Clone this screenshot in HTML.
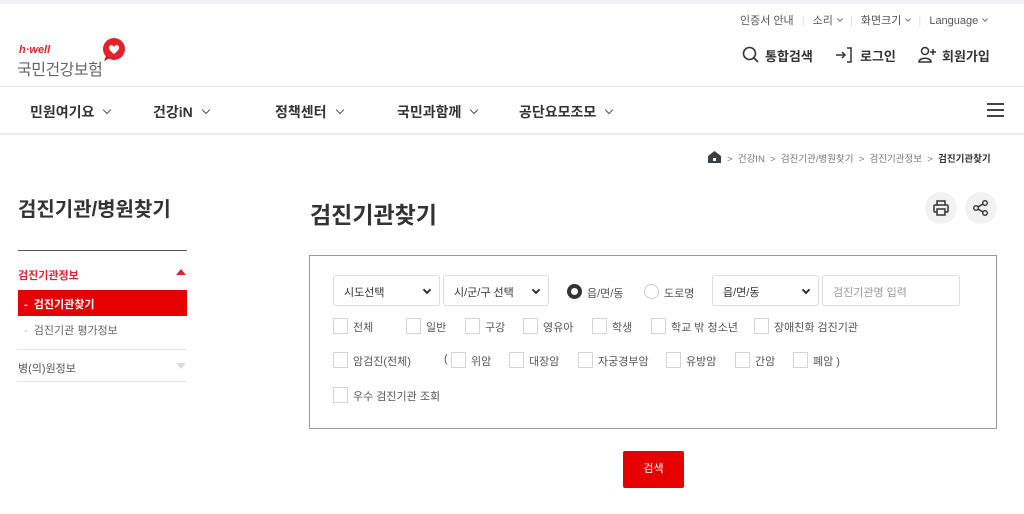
<!DOCTYPE html>
<html><head><meta charset="utf-8"><style>
*{margin:0;padding:0;box-sizing:border-box}
body{width:1024px;height:514px;overflow:hidden;background:#fff;font-family:"Liberation Sans","Noto Sans CJK KR",sans-serif;color:#333;position:relative}
.a{position:absolute;white-space:nowrap}
.cb{position:absolute;width:15px;height:16px;border:1px solid #d4d4d4;background:#fff}
.l{position:absolute;font-size:11px;color:#555;white-space:nowrap}
.sel{position:absolute;height:31px;border:1px solid #ddd;border-radius:3px;font-size:11px;color:#333;padding:8px 0 0 10px}
.sel:after{content:"";position:absolute;right:9px;top:11px;width:4px;height:4px;border-right:2px solid #333;border-bottom:2px solid #333;transform:rotate(45deg)}
.nav{position:absolute;top:102px;font-size:14px;font-weight:bold;color:#333}
.chev{display:inline-block;width:6px;height:6px;border-right:1.5px solid #555;border-bottom:1.5px solid #555;transform:rotate(45deg);margin-left:10px;position:relative;top:-4px}
.sc{display:inline-block;width:4px;height:4px;border-right:1px solid #777;border-bottom:1px solid #777;transform:rotate(45deg);margin-left:5px;position:relative;top:-3px}
</style></head><body>
<div class="a" style="left:0;top:0;width:1024px;height:4px;background:#eef0f6"></div>
<div class="a" style="top:12px;left:740px;font-size:11px;color:#555">인증서 안내 <span style="color:#ddd;margin:0 5px">|</span> 소리<span class="sc"></span> <span style="color:#ddd;margin:0 5px">|</span> 화면크기<span class="sc"></span> <span style="color:#ddd;margin:0 5px">|</span> Language<span class="sc"></span></div>
<!-- logo -->
<div class="a" style="left:19px;top:44px;font-size:11px;font-style:italic;font-weight:bold;color:#e2222a">h·well</div>
<div class="a" style="left:17px;top:56px;font-size:16px;color:#666;letter-spacing:-0.5px">국민건강보험</div>
<svg class="a" style="left:100px;top:36px" width="28" height="28" viewBox="0 0 28 28"><circle cx="14" cy="13" r="11" fill="#e2222a"/><path d="M6 20 L4 25 L10 22Z" fill="#c21a20"/><path d="M14 18 C9 14 8 12 9.5 10 C11 8.5 13 9 14 11 C15 9 17 8.5 18.5 10 C20 12 19 14 14 18Z" fill="#fff"/></svg>
<!-- header right -->
<svg class="a" style="left:742px;top:46px" width="18" height="18" viewBox="0 0 18 18" fill="none" stroke="#333" stroke-width="1.6"><circle cx="7.5" cy="7.5" r="6"/><path d="M12 12 L16 16"/></svg>
<div class="a" style="left:765px;top:46px;font-size:13px;font-weight:bold">통합검색</div>
<svg class="a" style="left:835px;top:47px" width="18" height="16" viewBox="0 0 18 16" fill="none" stroke="#333" stroke-width="1.5"><path d="M1 8 H10 M7 5 L10 8 L7 11 M12 1 H16 V15 H12"/></svg>
<div class="a" style="left:860px;top:46px;font-size:13px;font-weight:bold">로그인</div>
<svg class="a" style="left:918px;top:46px" width="20" height="17" viewBox="0 0 20 17" fill="none" stroke="#333" stroke-width="1.5"><circle cx="7" cy="5" r="3.5"/><path d="M1 16 C1 11 13 11 13 16Z"/><path d="M15 3 V9 M12 6 H18"/></svg>
<div class="a" style="left:942px;top:46px;font-size:13px;font-weight:bold">회원가입</div>
<div class="a" style="left:0;top:86px;width:1024px;height:1px;background:#e3e3e3"></div>
<div class="nav" style="left:30px">민원여기요<span class="chev"></span></div>
<div class="nav" style="left:153px">건강iN<span class="chev"></span></div>
<div class="nav" style="left:275px">정책센터<span class="chev"></span></div>
<div class="nav" style="left:397px">국민과함께<span class="chev"></span></div>
<div class="nav" style="left:519px">공단요모조모<span class="chev"></span></div>
<div class="a" style="left:987px;top:103px;width:17px;height:2px;background:#444;box-shadow:0 6px 0 #444,0 12px 0 #444"></div>
<div class="a" style="left:0;top:133px;width:1024px;height:2px;background:#eceef2"></div>
<!-- breadcrumb -->
<svg class="a" style="left:708px;top:151px" width="13" height="12" viewBox="0 0 13 12"><path d="M6.5 0 L13 5 V12 H0 V5Z" fill="#3a3f4a"/><rect x="5" y="7" width="3" height="3" fill="#fff"/></svg>
<div class="a" style="left:727px;top:151px;font-size:9.5px;color:#777">&gt;&nbsp; 건강IN &nbsp;&gt;&nbsp; 검진기관/병원찾기 &nbsp;&gt;&nbsp; 검진기관정보 &nbsp;&gt;&nbsp; <b style="color:#333">검진기관찾기</b></div>
<!-- left -->
<div class="a" style="left:18px;top:193px;font-size:20px;font-weight:bold;color:#333">검진기관/병원찾기</div>
<div class="a" style="left:18px;top:250px;width:169px;height:1px;background:#555"></div>
<div class="a" style="left:18px;top:267px;font-size:11px;color:#e2222a;font-weight:bold">검진기관정보</div>
<div class="a" style="left:176px;top:269px;width:0;height:0;border-left:5px solid transparent;border-right:5px solid transparent;border-bottom:6px solid #e2222a"></div>
<div class="a" style="left:18px;top:290px;width:169px;height:26px;background:#e60000"></div>
<div class="a" style="left:24px;top:296px;font-size:11px;color:#fff;font-weight:bold">-&nbsp; 검진기관찾기</div>
<div class="a" style="left:24px;top:322px;font-size:11px;color:#666"><span style="color:#bbb">-</span>&nbsp; 검진기관 평가정보</div>
<div class="a" style="left:18px;top:349px;width:169px;height:1px;background:#e5e5e5"></div>
<div class="a" style="left:18px;top:360px;font-size:11px;color:#555">병(의)원정보</div>
<div class="a" style="left:176px;top:363px;width:0;height:0;border-left:5px solid transparent;border-right:5px solid transparent;border-top:6px solid #ddd"></div>
<div class="a" style="left:18px;top:381px;width:169px;height:1px;background:#e5e5e5"></div>
<!-- main -->
<div class="a" style="left:310px;top:196px;font-size:23px;font-weight:bold;color:#333">검진기관찾기</div>
<div class="a" style="left:925px;top:192px;width:32px;height:32px;border-radius:50%;background:#f2f2f2"></div>
<svg class="a" style="left:932px;top:199px" width="18" height="18" viewBox="0 0 18 18" fill="none" stroke="#333" stroke-width="1.5"><path d="M5 6 V2 H13 V6"/><rect x="2" y="6" width="14" height="7" rx="1"/><rect x="5" y="10" width="8" height="6" fill="#f2f2f2"/></svg>
<div class="a" style="left:965px;top:192px;width:32px;height:32px;border-radius:50%;background:#f2f2f2"></div>
<svg class="a" style="left:972px;top:199px" width="18" height="18" viewBox="0 0 18 18" fill="none" stroke="#333" stroke-width="1.4"><circle cx="4" cy="9" r="2.3"/><circle cx="13" cy="4" r="2.3"/><circle cx="13" cy="14" r="2.3"/><path d="M6 8 L11 5 M6 10 L11 13"/></svg>
<div class="a" style="left:309px;top:255px;width:688px;height:174px;border:1px solid #9a9a9a"></div>
<div class="sel" style="left:333px;top:275px;width:107px">시도선택</div>
<div class="sel" style="left:443px;top:275px;width:106px">시/군/구 선택</div>
<div class="a" style="left:567px;top:284px;width:15px;height:15px;border-radius:50%;border:4.5px solid #333"></div>
<div class="l" style="left:587px;top:285px">읍/면/동</div>
<div class="a" style="left:644px;top:284px;width:15px;height:15px;border-radius:50%;border:1px solid #ccc"></div>
<div class="l" style="left:664px;top:285px">도로명</div>
<div class="sel" style="left:712px;top:275px;width:107px">읍/면/동</div>
<div class="a" style="left:822px;top:275px;width:138px;height:31px;border:1px solid #ddd;border-radius:3px;font-size:11px;color:#999;padding:8px 0 0 10px">검진기관명 입력</div>
<!-- row1 -->
<div class="cb" style="left:333px;top:318px"></div><div class="l" style="left:353px;top:319px">전체</div>
<div class="cb" style="left:406px;top:318px"></div><div class="l" style="left:426px;top:319px">일반</div>
<div class="cb" style="left:465px;top:318px"></div><div class="l" style="left:485px;top:319px">구강</div>
<div class="cb" style="left:523px;top:318px"></div><div class="l" style="left:543px;top:319px">영유아</div>
<div class="cb" style="left:592px;top:318px"></div><div class="l" style="left:612px;top:319px">학생</div>
<div class="cb" style="left:651px;top:318px"></div><div class="l" style="left:671px;top:319px">학교 밖 청소년</div>
<div class="cb" style="left:754px;top:318px"></div><div class="l" style="left:774px;top:319px">장애친화 검진기관</div>
<!-- row2 -->
<div class="cb" style="left:333px;top:352px"></div><div class="l" style="left:353px;top:353px">암검진(전체)</div>
<div class="l" style="left:444px;top:353px">(</div>
<div class="cb" style="left:451px;top:352px"></div><div class="l" style="left:471px;top:353px">위암</div>
<div class="cb" style="left:509px;top:352px"></div><div class="l" style="left:529px;top:353px">대장암</div>
<div class="cb" style="left:578px;top:352px"></div><div class="l" style="left:598px;top:353px">자궁경부암</div>
<div class="cb" style="left:666px;top:352px"></div><div class="l" style="left:686px;top:353px">유방암</div>
<div class="cb" style="left:735px;top:352px"></div><div class="l" style="left:755px;top:353px">간암</div>
<div class="cb" style="left:793px;top:352px"></div><div class="l" style="left:813px;top:353px">폐암 )</div>
<!-- row3 -->
<div class="cb" style="left:333px;top:387px"></div><div class="l" style="left:353px;top:388px">우수 검진기관 조회</div>
<div class="a" style="left:623px;top:451px;width:61px;height:37px;background:#e60000;border-radius:2px;color:#fff;font-size:11px;text-align:center;line-height:37px">검색</div>
</body></html>
